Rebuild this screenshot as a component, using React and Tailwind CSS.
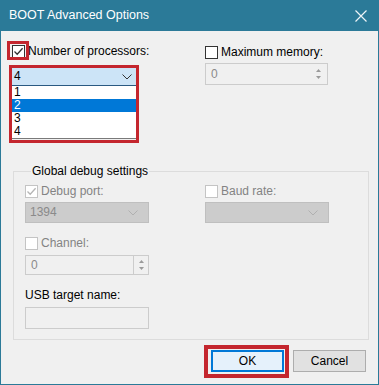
import React from "react";

const CheckBox = ({ checked, disabled }) => (
  <span
    className={`flex h-[13px] w-[13px] shrink-0 items-center justify-center border bg-white ${
      disabled ? "border-[#c4c4c4]" : "border-[#333333]"
    }`}
  >
    {checked && (
      <svg width="11" height="11" viewBox="0 0 11 11">
        <path
          d="M1.5 5.5 L4.2 8.2 L9.6 2.2"
          fill="none"
          stroke={disabled ? "#b5b5b5" : "#333333"}
          strokeWidth="1.3"
        />
      </svg>
    )}
  </span>
);

const CheckRow = ({ label, checked, disabled }) => (
  <div className="flex h-[13px] items-center gap-[3px]">
    <CheckBox checked={checked} disabled={disabled} />
    <span className={disabled ? "text-[#838383]" : "text-black"}>{label}</span>
  </div>
);

const Chevron = ({ color }) => (
  <svg width="10" height="6" viewBox="0 0 10 6">
    <path d="M0.5 0.5 L5 5 L9.5 0.5" fill="none" stroke={color} strokeWidth="1" />
  </svg>
);

const SpinArrows = ({ divider }) => (
  <div
    className={`flex h-full w-[15px] flex-col items-center justify-center gap-[4px] ${
      divider ? "border-l border-[#cccccc]" : ""
    }`}
  >
    <svg width="5" height="3" viewBox="0 0 5 3">
      <path d="M0 3 L2.5 0 L5 3 Z" fill="#9a9a9a" />
    </svg>
    <svg width="5" height="3" viewBox="0 0 5 3">
      <path d="M0 0 L2.5 3 L5 0 Z" fill="#9a9a9a" />
    </svg>
  </div>
);

const SpinBox = ({ className }) => (
  <div
    className={`flex items-center justify-between border border-[#cccccc] bg-[#f0f0f0] pl-[5px] text-[#8a8a8a] ${className}`}
  >
    <span>0</span>
    <SpinArrows divider={className.includes("h-[20px]")} />
  </div>
);

const DisabledCombo = ({ value }) => (
  <div className="flex h-[21px] w-[124px] items-center justify-between border border-[#bfbfbf] bg-[#cccccc] pl-[4px] pr-[10px] text-[#8a8a8a]">
    <span>{value}</span>
    <Chevron color="#b0b0b0" />
  </div>
);

export default function App() {
  return (
    <div className="flex h-[385px] w-[379px] flex-col bg-[#2b7a98] px-[1px] pb-[1px] font-['Liberation_Sans',Arial,sans-serif] text-[12px] leading-[15px]">
      {/* title bar */}
      <div className="flex h-[31px] shrink-0 items-center justify-between pl-[8px] pr-[11px] text-white">
        <span className="text-[12.5px]">BOOT Advanced Options</span>
        <svg width="12" height="12" viewBox="0 0 12 12">
          <path d="M0.5 0.5 L11.5 11.5 M11.5 0.5 L0.5 11.5" stroke="#eef5f8" strokeWidth="1.2" />
        </svg>
      </div>

      <div className="flex flex-1 flex-col bg-[#f0f0f0]">
        {/* top options */}
        <div className="flex h-[133px] shrink-0 pl-[11px] pt-[14px]">
          <div className="w-[193px]">
            <div className="relative w-fit">
              <CheckRow label="Number of processors:" checked />
              <span className="absolute left-[-5px] top-[-4px] h-[19px] w-[22px] border-[3px] border-[#c4262e]" />
            </div>
            <div className="relative mt-[10px] w-[124px]">
              <div className="flex h-[18px] items-center justify-between border-b border-[#2a5a82] bg-[#cce4f7] pl-[2px] pr-[4px]">
                <span>4</span>
                <Chevron color="#333333" />
              </div>
              <ul className="absolute left-0 top-full w-full border-b border-[#7a7a7a] bg-white">
                <li className="h-[13px] pl-[2px] leading-[13px]">1</li>
                <li className="h-[13px] bg-[#0078d7] pl-[2px] leading-[13px] text-white">2</li>
                <li className="h-[13px] pl-[2px] leading-[13px]">3</li>
                <li className="h-[13px] pl-[2px] leading-[13px]">4</li>
              </ul>
              <span className="absolute left-[-3px] right-[-3px] top-[-3px] h-[78px] border-[3px] border-[#c4262e]" />
            </div>
          </div>
          <div className="pt-[1px]">
            <CheckRow label="Maximum memory:" />
            <SpinBox className="mt-[4px] h-[22px] w-[123px] pr-[1px]" />
          </div>
        </div>

        {/* global debug settings */}
        <fieldset className="ml-[12px] w-[356px] border border-[#dcdcdc] pb-[10px] pl-[11px] pt-[6px]">
          <legend className="ml-[6px] px-[1px] leading-[15px] text-black">Global debug settings</legend>
          <div className="flex">
            <div className="w-[180px]">
              <CheckRow label="Debug port:" checked disabled />
              <div className="mt-[4px]">
                <DisabledCombo value="1394" />
              </div>
            </div>
            <div>
              <CheckRow label="Baud rate:" disabled />
              <div className="mt-[4px]">
                <DisabledCombo value="" />
              </div>
            </div>
          </div>
          <div className="mt-[14px]">
            <CheckRow label="Channel:" disabled />
            <SpinBox className="mt-[5px] h-[20px] w-[124px]" />
          </div>
          <div className="mt-[13px] text-black">USB target name:</div>
          <div className="mt-[4px] h-[22px] w-[124px] border border-[#cccccc] bg-[#f0f0f0]" />
        </fieldset>

        {/* buttons */}
        <div className="mt-[10px] flex justify-end gap-[9px] pr-[12px]">
          <div className="relative">
            <button className="flex h-[22px] w-[73px] items-center justify-center border-2 border-[#0078d7] bg-[#e5f1fb] text-black">
              OK
            </button>
            <span className="absolute bottom-[-6px] left-[-7px] right-[-5px] top-[-5px] border-[4px] border-[#c4262e]" />
          </div>
          <button className="flex h-[22px] w-[73px] items-center justify-center border border-[#adadad] bg-[#e1e1e1] text-black">
            Cancel
          </button>
        </div>
      </div>
    </div>
  );
}
